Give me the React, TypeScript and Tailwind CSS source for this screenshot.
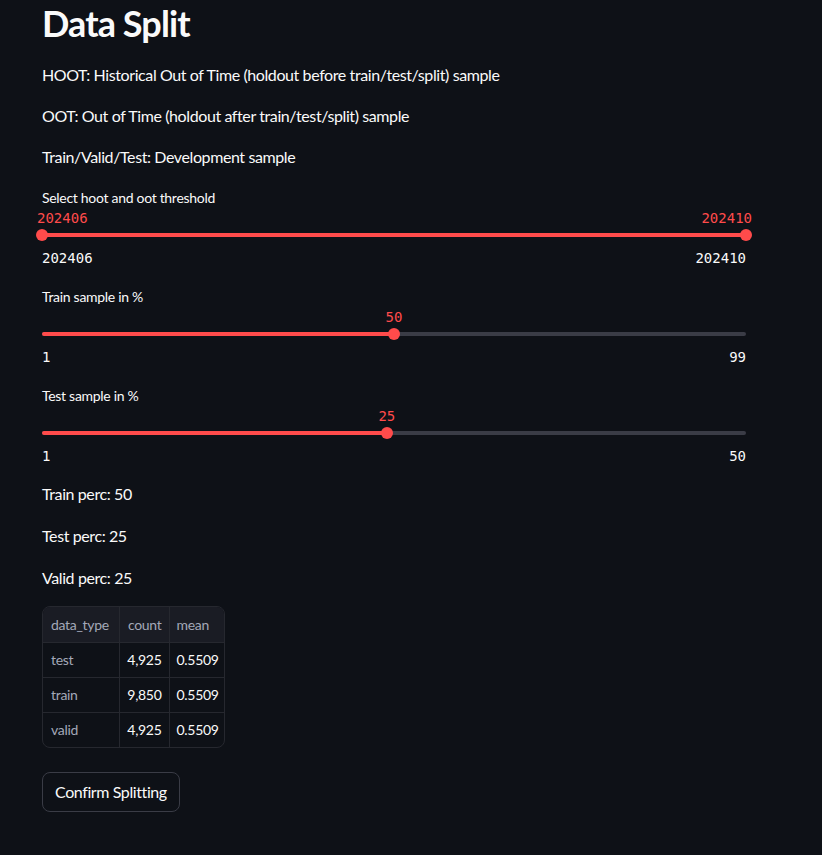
import React from "react";

const sans = { fontFamily: "Lato, 'Noto Sans', sans-serif" };
const mono = { fontFamily: "'DejaVu Sans Mono', 'Liberation Mono', monospace" };

function Slider({
  label,
  min,
  max,
  values,
}: {
  label: string;
  min: number;
  max: number;
  values: number[];
}) {
  const pct = (v: number) => ((v - min) / (max - min)) * 100;
  const range = values.length === 2;
  const start = range ? pct(values[0]) : 0;
  const end = range ? pct(values[1]) : pct(values[0]);
  return (
    <div className="flex flex-col">
      <div className="text-[14px] leading-[20px] text-[#fafafa] tracking-[-0.3px]" style={sans}>
        {label}
      </div>
      <div className="relative h-[20px] mt-[1px]">
        {range ? (
          <>
            <span
              className="absolute top-[1px] left-[-5px] text-[14px] leading-[16px] text-[#ff4b4b] whitespace-nowrap"
              style={mono}
            >
              {values[0]}
            </span>
            <span
              className="absolute top-[1px] right-[-6px] text-[14px] leading-[16px] text-[#ff4b4b] whitespace-nowrap"
              style={mono}
            >
              {values[1]}
            </span>
          </>
        ) : (
          <span
            className="absolute top-[1px] text-[14px] leading-[16px] text-[#ff4b4b] -translate-x-1/2 whitespace-nowrap"
            style={{ ...mono, left: `${pct(values[0])}%` }}
          >
            {values[0]}
          </span>
        )}
      </div>
      <div className="relative h-[12px] flex items-center">
        <div className="w-full h-[4px] rounded-full bg-[#3a3c46] relative">
          <div
            className="absolute top-0 h-[4px] rounded-full bg-[#ff4b4b]"
            style={{ left: `${start}%`, width: `${end - start}%` }}
          />
        </div>
        {values.map((v, i) => (
          <div
            key={i}
            className="absolute top-0 w-[12px] h-[12px] rounded-full bg-[#ff4b4b] -translate-x-1/2"
            style={{ left: `${pct(v)}%` }}
          />
        ))}
      </div>
      <div
        className="flex justify-between text-[14px] leading-[16px] text-[#fafafa] mt-[9px]"
        style={mono}
      >
        <span>{min}</span>
        <span>{max}</span>
      </div>
    </div>
  );
}

export default function App() {
  const rows = [
    ["test", "4,925", "0.5509"],
    ["train", "9,850", "0.5509"],
    ["valid", "4,925", "0.5509"],
  ];
  return (
    <div className="min-h-[855px] w-full bg-[#0e1117] text-[#fafafa]" style={sans}>
      <div className="w-[704px] ml-[42px] flex flex-col">
        <h1 className="text-[36px] leading-[48px] font-bold mt-[-1px] tracking-[-0.9px]">Data Split</h1>
        <p className="text-[16px] leading-[24px] mt-[16px] tracking-[-0.4px]">
          HOOT: Historical Out of Time (holdout before train/test/split) sample
        </p>
        <p className="text-[16px] leading-[24px] mt-[17px] tracking-[-0.4px]">
          OOT: Out of Time (holdout after train/test/split) sample
        </p>
        <p className="text-[16px] leading-[24px] mt-[17px] tracking-[-0.4px]">Train/Valid/Test: Development sample</p>
        <div className="mt-[19px]">
          <Slider label="Select hoot and oot threshold" min={202406} max={202410} values={[202406, 202410]} />
        </div>
        <div className="mt-[21px]">
          <Slider label="Train sample in %" min={1} max={99} values={[50]} />
        </div>
        <div className="mt-[21px]">
          <Slider label="Test sample in %" min={1} max={50} values={[25]} />
        </div>
        <p className="text-[16px] leading-[24px] mt-[18px] tracking-[-0.4px]">Train perc: 50</p>
        <p className="text-[16px] leading-[24px] mt-[18px] tracking-[-0.4px]">Test perc: 25</p>
        <p className="text-[16px] leading-[24px] mt-[18px] tracking-[-0.4px]">Valid perc: 25</p>
        <div className="mt-[16px] w-[183px] rounded-[8px] border border-[#26282f] overflow-hidden">
          <table className="w-full border-collapse table-fixed text-[14px] tracking-[-0.3px]">
            <thead>
              <tr className="h-[35px] bg-[#1a1c24] text-[#a3a8b8]">
                <th className="font-normal text-left px-[8px] w-[76px] border-r border-b border-[#26282f]">data_type</th>
                <th className="font-normal text-right px-[7px] w-[50px] border-r border-b border-[#26282f]">count</th>
                <th className="font-normal text-left px-[7px] border-b border-[#26282f]">mean</th>
              </tr>
            </thead>
            <tbody>
              {rows.map((r, i) => (
                <tr key={i} className="h-[35px]">
                  <td className={`text-left px-[8px] text-[#a3a8b8] border-r border-[#26282f] ${i < 2 ? "border-b" : ""}`}>{r[0]}</td>
                  <td className={`text-right px-[7px] text-[#fafafa] border-r border-[#26282f] ${i < 2 ? "border-b" : ""}`}>{r[1]}</td>
                  <td className={`text-left px-[7px] text-[#fafafa] border-[#26282f] ${i < 2 ? "border-b" : ""}`}>{r[2]}</td>
                </tr>
              ))}
            </tbody>
          </table>
        </div>
        <button className="mt-[24px] self-start h-[40px] px-[12px] rounded-[8px] border border-[#3a3c46] bg-[#0e1117] text-[16px] text-[#fafafa] tracking-[-0.4px]">
          Confirm Splitting
        </button>
      </div>
    </div>
  );
}
